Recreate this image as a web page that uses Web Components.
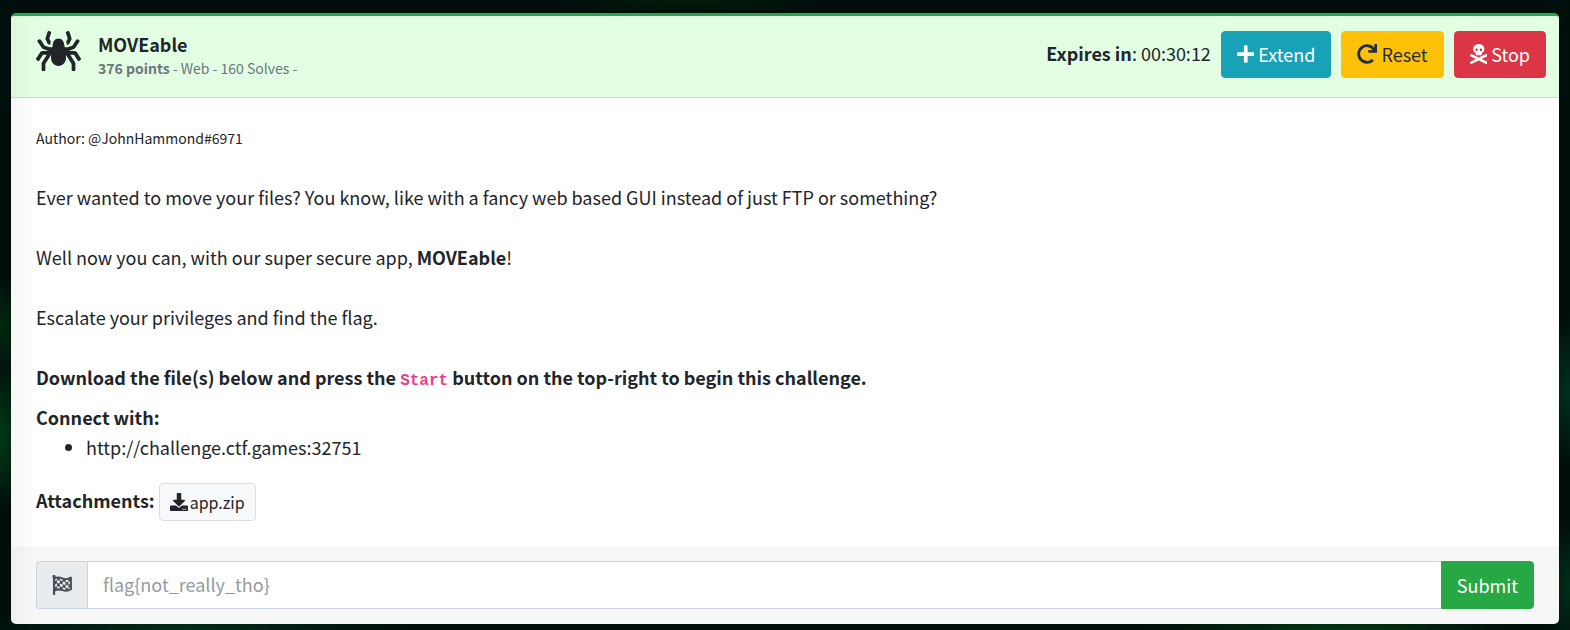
<!DOCTYPE html>
<html lang="en">
<head>
<meta charset="utf-8">
<title>MOVEable</title>
<style>
body{margin:0;min-height:100vh;display:flow-root;padding-top:13px;box-sizing:border-box;font:18px/30px "Noto Sans CJK SC","Noto Sans",sans-serif;color:#212529;
  background:
    radial-gradient(ellipse 30px 12% at 0 69%,#003a14,transparent),
    radial-gradient(ellipse 30px 8% at 0 52%,#00280f,transparent),
    radial-gradient(ellipse 30px 12% at 100% 62%,#00301f,transparent),
    radial-gradient(ellipse 30px 10% at 100% 93%,#003018,transparent),
    radial-gradient(ellipse 12% 20px at 85% 100%,#003a12,transparent),
    radial-gradient(ellipse 14% 20px at 12% 100%,#00301a,transparent),
    radial-gradient(ellipse 8% 14px at 44% 0,#001e06,transparent),
    #000f0c}
ctf-challenge{margin:0 11px}
</style>
</head>
<body>
<ctf-challenge>
  <ctf-header slot="header">
    <ctf-icon slot="icon" name="spider"></ctf-icon>
    <span slot="title">MOVEable</span>
    <b slot="meta">376 points</b><span slot="meta"> - Web - 160 Solves -</span>
    <span slot="actions"><b>Expires in</b>: 00:30:12</span>
    <ctf-button slot="actions" kind="info" icon="plus">Extend</ctf-button>
    <ctf-button slot="actions" kind="warning" icon="redo">Reset</ctf-button>
    <ctf-button slot="actions" kind="danger" icon="skull">Stop</ctf-button>
  </ctf-header>
  <ctf-description></ctf-description>
  <ctf-flag-form slot="footer"></ctf-flag-form>
</ctf-challenge>
<script>
const ICONS = {
  spider: ['0 0 576 512', '<path fill="currentColor" d="M151.17 167.35L177.1 176h4.67l5.22-26.12c.72-3.58 1.8-7.58 3.21-11.79l-20.29-40.58 23.8-71.39c2.79-8.38-1.67-17.44-10.06-20.24L168.47.83c-8.38-2.79-17.45 1.71-20.24 10.12l-25.89 77.68a32.04 32.04 0 0 0 1.73 24.43l27.1 54.29zm422.14 182.03l-52.75-79.12a32.002 32.002 0 0 0-26.62-14.25H416l68.99-24.36a32.03 32.03 0 0 0 16.51-12.61l53.6-80.41c4.9-7.35 2.91-17.29-4.44-22.19l-13.31-8.88c-7.35-4.9-17.29-2.91-22.19 4.44l-50.56 75.83L404.1 208H368l-10.37-51.85C355.44 145.18 340.26 96 288 96c-52.26 0-67.44 49.18-69.63 60.15L208 208h-36.1l-60.49-20.17L60.84 112c-4.9-7.35-14.83-9.34-22.19-4.44l-13.31 8.88c-7.35 4.9-9.34 14.83-4.44 22.19l53.6 80.41a32.03 32.03 0 0 0 16.51 12.61L160 256H82.06a32.02 32.02 0 0 0-26.63 14.25L2.69 349.38c-4.9 7.35-2.92 17.29 4.44 22.19l13.31 8.88c7.35 4.9 17.29 2.91 22.19-4.44l48-72h47.06l-60.83 97.33A31.988 31.988 0 0 0 72 418.3V496c0 8.84 7.16 16 16 16h16c8.84 0 16-7.16 16-16v-73.11l74.08-118.53c-1.01 14.05-2.08 28.11-2.08 42.21C192 399.64 232.76 448 288 448s96-48.36 96-101.43c0-14.1-1.08-28.16-2.08-42.21L456 422.89V496c0 8.84 7.16 16 16 16h16c8.84 0 16-7.16 16-16v-77.71c0-6-1.69-11.88-4.86-16.96L438.31 304h47.06l48 72c4.9 7.35 14.84 9.34 22.19 4.44l13.31-8.88c7.36-4.9 9.34-14.83 4.44-22.18zM406.09 97.51l-20.29 40.58c1.41 4.21 2.49 8.21 3.21 11.79l5.22 26.12h4.67l25.93-8.65 27.1-54.28a31.95 31.95 0 0 0 1.73-24.43l-25.9-77.69C424.96 2.57 415.9-1.97 407.52.83L392.34 5.89c-8.39 2.79-12.85 11.86-10.06 20.24l23.81 71.38z"/>'],
  plus: ['0 0 448 512', '<path fill="currentColor" d="M416 208H272V64c0-17.67-14.33-32-32-32h-32c-17.67 0-32 14.33-32 32v144H32c-17.67 0-32 14.33-32 32v32c0 17.67 14.33 32 32 32h144v144c0 17.67 14.33 32 32 32h32c17.67 0 32-14.33 32-32V304h144c17.67 0 32-14.33 32-32v-32c0-17.67-14.33-32-32-32z"/>'],
  redo: ['0 0 512 512', '<path fill="currentColor" d="M500.33 0h-47.41a12 12 0 0 0-12 12.57l4 82.76A247.42 247.42 0 0 0 256 8C119.34 8 7.9 119.53 8 256.19 8.1 393.07 119.1 504 256 504a247.1 247.1 0 0 0 166.18-63.91 12 12 0 0 0 .48-17.43l-34-34a12 12 0 0 0-16.38-.55A176 176 0 1 1 402.1 157.8l-101.53-4.87a12 12 0 0 0-12.57 12v47.41a12 12 0 0 0 12 12h200.33a12 12 0 0 0 12-12V12a12 12 0 0 0-12-12z"/>'],
  skull: ['0 0 448 512', '<path fill="currentColor" d="M439.15 453.06L297.17 384l141.99-69.06c7.9-3.95 11.11-13.56 7.15-21.46L432 264.85c-3.95-7.9-13.56-11.11-21.47-7.16L224 348.41 37.47 257.69c-7.9-3.95-17.51-.75-21.47 7.16L1.69 293.48c-3.95 7.9-.75 17.51 7.15 21.46L150.83 384 8.85 453.06c-7.9 3.95-11.11 13.56-7.15 21.47l14.31 28.63c3.95 7.9 13.56 11.11 21.47 7.15L224 419.59l186.53 90.72c7.9 3.95 17.51.75 21.47-7.15l14.31-28.63c3.95-7.91.74-17.52-7.16-21.47zM150 237.28l-5.48 25.87c-2.67 12.62 5.42 24.85 16.45 24.85h126.08c11.03 0 19.12-12.23 16.45-24.85l-5.5-25.87c41.78-22.41 70-62.75 70-109.28C368 57.31 303.53 0 224 0S80 57.31 80 128c0 46.53 28.22 86.87 70 109.28zM280 112c17.65 0 32 14.35 32 32s-14.35 32-32 32-32-14.35-32-32 14.35-32 32-32zm-112 0c17.65 0 32 14.35 32 32s-14.35 32-32 32-32-14.35-32-32 14.35-32 32-32z"/>'],
  download: ['0 0 512 512', '<path fill="currentColor" d="M216 0h80c13.3 0 24 10.7 24 24v168h87.7c17.8 0 26.7 21.5 14.1 34.1L269.7 378.3c-7.5 7.5-19.8 7.5-27.3 0L90.1 226.1c-12.6-12.6-3.7-34.1 14.1-34.1H192V24c0-13.3 10.7-24 24-24zm296 376v112c0 13.3-10.7 24-24 24H24c-13.3 0-24-10.7-24-24V376c0-13.3 10.7-24 24-24h146.7l49 49c20.1 20.1 52.5 20.1 72.6 0l49-49H488c13.3 0 24 10.7 24 24zm-124 88c0-11-9-20-20-20s-20 9-20 20 9 20 20 20 20-9 20-20zm64 0c0-11-9-20-20-20s-20 9-20 20 9 20 20 20 20-9 20-20z"/>'],
  flag: ['0 0 512 512', '<path fill="currentColor" d="M8 40a44 44 0 1 1 72 34v422a16 16 0 0 1-16 16H40a16 16 0 0 1-16-16V74A44 44 0 0 1 8 40z"/><path fill="none" stroke="currentColor" stroke-width="52" stroke-linejoin="round" d="M60 92c80-48 160-24 220 0s120 24 204-24v296c-80 56-146 48-212 22s-140-24-212 14"/><path fill="currentColor" d="M128 62l72-8v82l-72 6zM272 86l74 20v82l-74-22zM418 92l74-28v86l-74 26zM60 160l68-24v84l-68 24zM200 130l72 30v80l-72-24zM346 182l72-12v84l-72 8zM128 214l72-4v86l-72 2zM272 234l74 22v86l-74-24zM418 248l74-32v86l-74 30zM60 312l68-20v84l-68 24zM200 290l72 22v80l-72-16zM346 336l72-10v76l-72 8z"/>']
};

class CtfIcon extends HTMLElement {
  constructor() {
    super();
    this.attachShadow({mode: 'open'});
  }
  connectedCallback() {
    const [box, art] = ICONS[this.getAttribute('name')];
    this.shadowRoot.innerHTML = `<style>
      :host{display:inline-flex;flex:none;height:20px}
      svg{height:100%;display:block}
    </style><svg viewBox="${box}" aria-hidden="true">${art}</svg>`;
  }
}

class CtfButton extends HTMLElement {
  constructor() {
    super();
    this.attachShadow({mode: 'open'});
  }
  connectedCallback() {
    this.shadowRoot.innerHTML = `<style>
      :host{display:inline-block;--bg:#17a2b8;--fg:#fff;--line:var(--bg)}
      :host([kind=warning]){--bg:#ffc107;--fg:#1f2d3d}
      :host([kind=danger]){--bg:#dc3545}
      :host([kind=success]){--bg:#28a745}
      :host([kind=light]){--bg:#f8f9fa;--fg:#212529;--line:#ddd}
      button{display:flex;align-items:center;gap:4px;box-sizing:border-box;height:47px;padding:0 15px 1px;border:1px solid var(--line);border-radius:4px;background:var(--bg);color:var(--fg);font:inherit;line-height:30px;cursor:pointer}
      :host([kind=light]) button{height:38px;padding:0 10px 1px;font-size:16px;gap:2px}
      ctf-icon{height:20px}
      :host([kind=light]) ctf-icon{height:18px}
      :host([kind=success]) button{height:48px;border-radius:0 4px 4px 0}
    </style><button type="button">${this.hasAttribute('icon') ? `<ctf-icon name="${this.getAttribute('icon')}"></ctf-icon>` : ''}<span><slot></slot></span></button>`;
  }
}

class CtfHeader extends HTMLElement {
  constructor() {
    super();
    this.attachShadow({mode: 'open'}).innerHTML = `<style>
      :host{display:flex;justify-content:space-between;align-items:flex-start;padding:15px 13px 18px 25px;background:#e3ffe3;border-bottom:1px solid #c6dec9}
      .user{display:flex;gap:17px}
      ::slotted(ctf-icon){height:40px}
      h1{margin:0;font-size:18px;line-height:26px}
      .meta{font-size:14px;line-height:22px;color:#6c757d;white-space:pre}
      .actions{display:flex;align-items:flex-start;gap:10px;line-height:44px}
    </style>
    <div class="user"><slot name="icon"></slot><div class="title"><h1><slot name="title"></slot></h1><div class="meta"><slot name="meta"></slot></div></div></div>
    <div class="actions"><slot name="actions"></slot></div>`;
  }
}

class CtfDescription extends HTMLElement {
  constructor() {
    super();
    this.attachShadow({mode: 'open'}).innerHTML = `<style>
      :host{display:block;padding:24px 25px 25px}
      p{margin:0 0 30px}
      .author{font-size:14px;line-height:32px;margin-bottom:28px}
      .steps{margin-bottom:10px}
      code{font:bold 16px/20px "Liberation Mono",monospace;color:#e83e8c}
      ul{margin:0 0 20px;padding-left:50px}
      .files{display:flex;align-items:flex-start;gap:4px;line-height:35px;padding-top:1px}
    </style>
    <p class="author">Author: @JohnHammond#6971</p>
    <p>Ever wanted to move your files? You know, like with a fancy web based GUI instead of just FTP or something?</p>
    <p>Well now you can, with our super secure app, <b>MOVEable</b>!</p>
    <p>Escalate your privileges and find the flag.</p>
    <p class="steps"><b>Download the file(s) below and press the <code>Start</code> button on the top-right to begin this challenge.</b></p>
    <b>Connect with:</b>
    <ul><li>http://challenge.ctf.games:32751</li></ul>
    <div class="files"><b>Attachments:</b><ctf-button kind="light" icon="download">app.zip</ctf-button></div>`;
  }
}

class CtfFlagForm extends HTMLElement {
  constructor() {
    super();
    this.attachShadow({mode: 'open'}).innerHTML = `<style>
      :host{display:block;padding:15px 25px;background:rgba(0,0,0,.03)}
      form{display:flex}
      label{display:flex;align-items:center;justify-content:center;box-sizing:border-box;width:51px;height:48px;background:#e9ecef;border:1px solid #ced4da;border-right:0;border-radius:4px 0 0 4px;color:#495057}
      input{flex:1;min-width:0;box-sizing:border-box;height:48px;padding:0 15px 2px;border:1px solid #ced4da;border-right:0;border-radius:0;background:#fff;color:#495057;font:inherit;outline:0}
      input::placeholder{color:#939ba2;opacity:1}
    </style>
    <form><label for="flag"><ctf-icon name="flag"></ctf-icon></label><input id="flag" type="text" aria-label="Flag" placeholder="flag{not_really_tho}"><ctf-button kind="success">Submit</ctf-button></form>`;
  }
}

class CtfChallenge extends HTMLElement {
  constructor() {
    super();
    this.attachShadow({mode: 'open'}).innerHTML = `<style>
      :host{display:block;position:relative;background:#fff;border-top:3px solid #28a745;border-radius:5px;overflow:hidden}
      :host::after{content:"";position:absolute;inset:0 auto 0 0;width:25px;background:linear-gradient(90deg,rgba(0,0,0,.03),transparent);pointer-events:none}
    </style><slot name="header"></slot><slot></slot><slot name="footer"></slot>`;
  }
}

customElements.define('ctf-icon', CtfIcon);
customElements.define('ctf-button', CtfButton);
customElements.define('ctf-header', CtfHeader);
customElements.define('ctf-description', CtfDescription);
customElements.define('ctf-flag-form', CtfFlagForm);
customElements.define('ctf-challenge', CtfChallenge);
</script>
</body>
</html>
